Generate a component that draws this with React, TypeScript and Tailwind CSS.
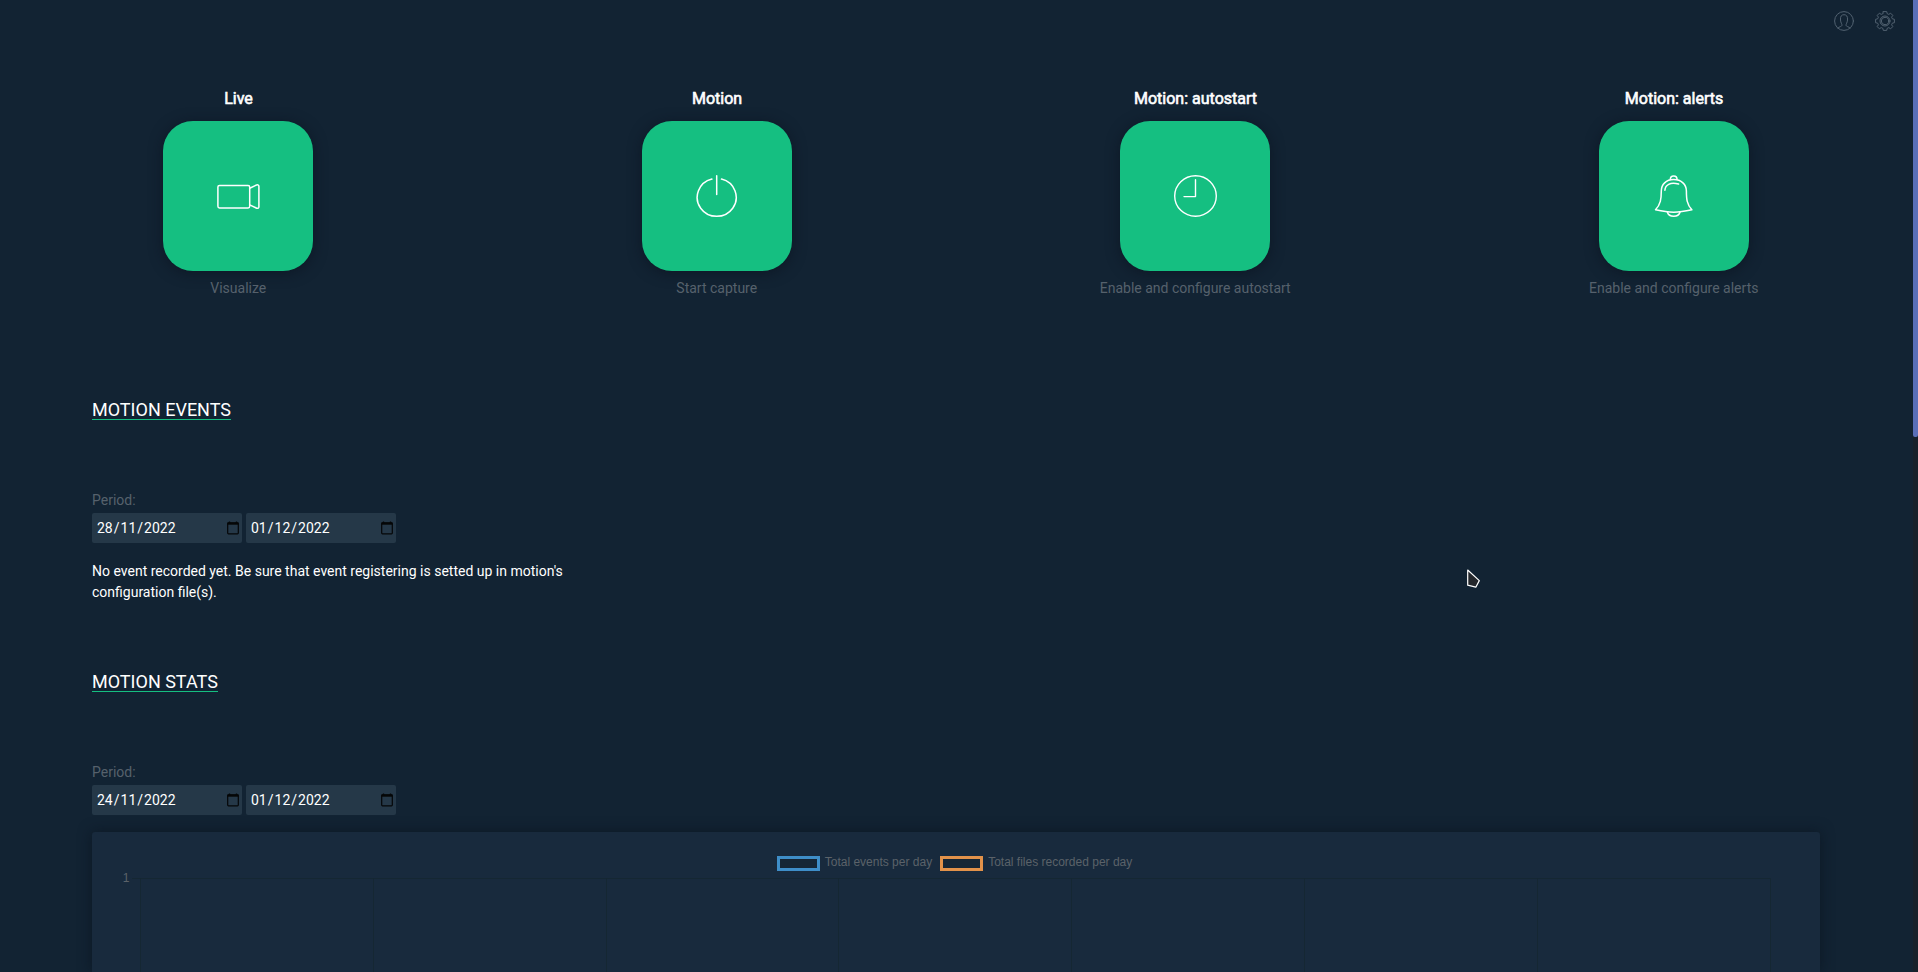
import { ReactNode } from "react";

const svgBase = { fill: "none", stroke: "currentColor", strokeLinecap: "round", strokeLinejoin: "round" } as const;

const CameraIcon = () => (
  <svg className="size-11" viewBox="0 0 44 44" strokeWidth="1.5" {...svgBase}>
    <rect x="1.9" y="11.5" width="31.8" height="22.4" rx="1.6" />
    <path d="M33.7 14.2 L40.7 10.9 Q42.7 10.5 42.9 12.2 V33 Q42.7 34.8 40.7 34.2 L33.7 30.9" />
  </svg>
);

const PowerIcon = () => (
  <svg className="size-11" viewBox="0 0 44 44" strokeWidth="1.5" {...svgBase}>
    <path d="M16.9 5.1 A19.5 18.9 0 1 0 26.5 5.1" />
    <path d="M21.7 1.7 V20.5" />
  </svg>
);

const ClockIcon = () => (
  <svg className="size-11" viewBox="0 0 44 44" strokeWidth="1.4" {...svgBase}>
    <ellipse cx="22.5" cy="22" rx="20.8" ry="20.3" />
    <path d="M22.5 5.8 V22.6 H11" />
  </svg>
);

const BellIcon = () => (
  <svg className="size-11" viewBox="0 0 44 44" strokeWidth="1.5" {...svgBase}>
    <path d="M18.3 5.6 C18.3 0.7 25.1 0.7 25.1 5.6" />
    <path d="M21.7 5.6 C14 5.6 9.3 10.5 9.3 17 C9.3 25 8.6 30.5 3.5 35.8 C9 37 15 38.2 21.7 38.2 C28.4 38.2 34.4 37 39.9 35.8 C34.8 30.5 34.4 25 34.4 17 C34.4 10.5 29.4 5.6 21.7 5.6 Z" />
    <path d="M15.4 38.2 C17 43.5 26.4 43.5 28 38.2" />
    <path d="M12.9 16.2 C13.2 11 18 7.8 26.6 10" />
  </svg>
);

const UserIcon = () => (
  <svg className="size-5" viewBox="0 0 20 20" strokeWidth="1" {...svgBase}>
    <circle cx="10" cy="10" r="9.4" />
    <path d="M3.8 17 C5 15.7 7.9 15.6 8 14.3 C8.1 12.9 6.7 12 6.5 9 C6.2 5.4 7.4 3.7 10 3.7 C12.6 3.7 13.8 5.4 13.5 9 C13.3 12 11.9 12.9 12 14.3 C12.1 15.6 15 15.7 16.2 17" />
  </svg>
);

const GearIcon = () => (
  <svg className="size-5" viewBox="0 0 20 20" strokeWidth="1" {...svgBase}>
    <path d="M8.3 0.6 H11.7 L12.2 2.7 L13.8 3.4 L15.6 2.2 L17.8 4.4 L16.6 6.2 L17.3 7.8 L19.4 8.3 V11.7 L17.3 12.2 L16.6 13.8 L17.8 15.6 L15.6 17.8 L13.8 16.6 L12.2 17.3 L11.7 19.4 H8.3 L7.8 17.3 L6.2 16.6 L4.4 17.8 L2.2 15.6 L3.4 13.8 L2.7 12.2 L0.6 11.7 V8.3 L2.7 7.8 L3.4 6.2 L2.2 4.4 L4.4 2.2 L6.2 3.4 L7.8 2.7 Z" />
    <circle cx="10" cy="10" r="5" />
    <circle cx="10" cy="10" r="3.7" />
  </svg>
);

const CalendarIcon = () => (
  <svg className="h-[14px] w-3" viewBox="0 0 12 14" fill="none" stroke="#050607" strokeWidth="1.2">
    <rect x="0.7" y="1.8" width="10.6" height="11" rx="0.8" />
    <path d="M0.6 2.6 H11.4" strokeWidth="2.2" />
    <path d="M2.5 0.4 V3 M9.5 0.4 V3" strokeWidth="1.3" />
  </svg>
);

const tiles: { title: string; caption: string; icon: ReactNode }[] = [
  { title: "Live", caption: "Visualize", icon: <CameraIcon /> },
  { title: "Motion", caption: "Start capture", icon: <PowerIcon /> },
  { title: "Motion: autostart", caption: "Enable and configure autostart", icon: <ClockIcon /> },
  { title: "Motion: alerts", caption: "Enable and configure alerts", icon: <BellIcon /> },
];

const DateField = ({ value }: { value: string }) => {
  const [day, month, year] = value.split("/");
  return (
    <button className="flex h-[30px] w-[150px] items-center justify-between rounded-[2px] bg-[#253848] pr-[3px] pl-1 text-[14px] text-white">
      <span className="flex">
        <span className="px-px">{day}</span>/<span className="px-px">{month}</span>/<span className="px-px">{year}</span>
      </span>
      <CalendarIcon />
    </button>
  );
};

const Period = ({ from, to }: { from: string; to: string }) => (
  <div>
    <div className="h-[23px] text-[14px] leading-[20px] text-[#56616c]">Period:</div>
    <div className="flex gap-1">
      <DateField value={from} />
      <DateField value={to} />
    </div>
  </div>
);

const SectionTitle = ({ children }: { children: ReactNode }) => (
  <h2 className="h-[22px] w-fit border-b border-[#15bf81] text-[18px] leading-[23px] text-white">{children}</h2>
);

const Legend = ({ label, box }: { label: string; box: string }) => (
  <div className="flex items-start gap-[5px]">
    <span className={`mt-px h-[15px] w-[43px] border-[3px] bg-[#152635] ${box}`} />
    <span>{label}</span>
  </div>
);

const gridX = [8.5, 241.5, 474.5, 706.5, 939.5, 1172.5, 1405.5, 1638.5];

export default function App() {
  return (
    <div className="flex h-[972px] w-full overflow-hidden bg-[#122333] font-[Roboto,sans-serif]">
      <main className="flex min-w-0 flex-1 flex-col">
        <header className="flex h-[42px] shrink-0 items-center justify-end gap-[21px] pr-[18px] text-[#526271]">
          <UserIcon />
          <GearIcon />
        </header>

        <section className="-ml-px grid h-[346px] shrink-0 grid-cols-4 pt-[47px]">
          {tiles.map((t) => (
            <div key={t.title} className="flex flex-col items-center">
              <div className="h-8 pl-[0.5px] text-[16px] leading-[20px] text-white [-webkit-text-stroke:0.6px_white]">{t.title}</div>
              <div className="flex size-[150px] items-center justify-center rounded-[30px] bg-[#15bf81] text-white shadow-[0_2px_14px_rgba(10,16,28,0.6)]">
                {t.icon}
              </div>
              <div className="mt-[7px] text-[14px] leading-[20px] text-[#56616c]">{t.caption}</div>
            </div>
          ))}
        </section>

        <section className="flex h-[272px] shrink-0 flex-col pt-[10px] pl-[92px]">
          <SectionTitle>MOTION EVENTS</SectionTitle>
          <div className="mt-[70px]">
            <Period from="28/11/2022" to="01/12/2022" />
          </div>
          <p className="mt-[18px] w-[478px] text-[14px] leading-[21px] text-white">
            No event recorded yet. Be sure that event registering is setted up in motion's configuration file(s).
          </p>
        </section>

        <section className="flex min-h-0 flex-1 flex-col pt-[10px] pr-[93px] pl-[92px]">
          <SectionTitle>MOTION STATS</SectionTitle>
          <div className="mt-[70px]">
            <Period from="24/11/2022" to="01/12/2022" />
          </div>
          <div className="mt-[17px] flex min-h-0 flex-1 flex-col rounded-t-[3px] bg-[#182a3d] pt-[23px] font-['Liberation_Sans',sans-serif] text-[12px] leading-[14px] text-[#5b6269] shadow-[0_0_14px_rgba(8,16,26,0.6)]">
            <div className="flex h-[18px] justify-center gap-2 pr-[3px]">
              <Legend label="Total events per day" box="border-[#3e8ec8]" />
              <Legend label="Total files recorded per day" box="border-[#e2924a]" />
            </div>
            <div className="flex pl-[29px]">
              <div className="w-[11px] pr-px text-center">1</div>
              <svg className="h-[120px] w-[1640px]" fill="none" stroke="#152733" strokeWidth="1">
                <path d="M0 7.5 H1638.5" />
                {gridX.map((x) => (
                  <path key={x} d={`M${x} 7.5 V120`} />
                ))}
              </svg>
            </div>
          </div>
        </section>
      </main>

      <div className="w-[5px] shrink-0 bg-[#17212b]">
        <div className="h-[437px] rounded-b-[2px] bg-[#5a6fb8]" />
      </div>

      <svg className="absolute top-[568px] left-[1466px] h-[22px] w-4" viewBox="0 0 16 22" fill="#24272c" stroke="#fff" strokeWidth="1.2" strokeLinejoin="round">
        <path d="M1.7 2 L13.3 12.6 L9.8 19.2 L1.7 17.2 Z" />
      </svg>
    </div>
  );
}
